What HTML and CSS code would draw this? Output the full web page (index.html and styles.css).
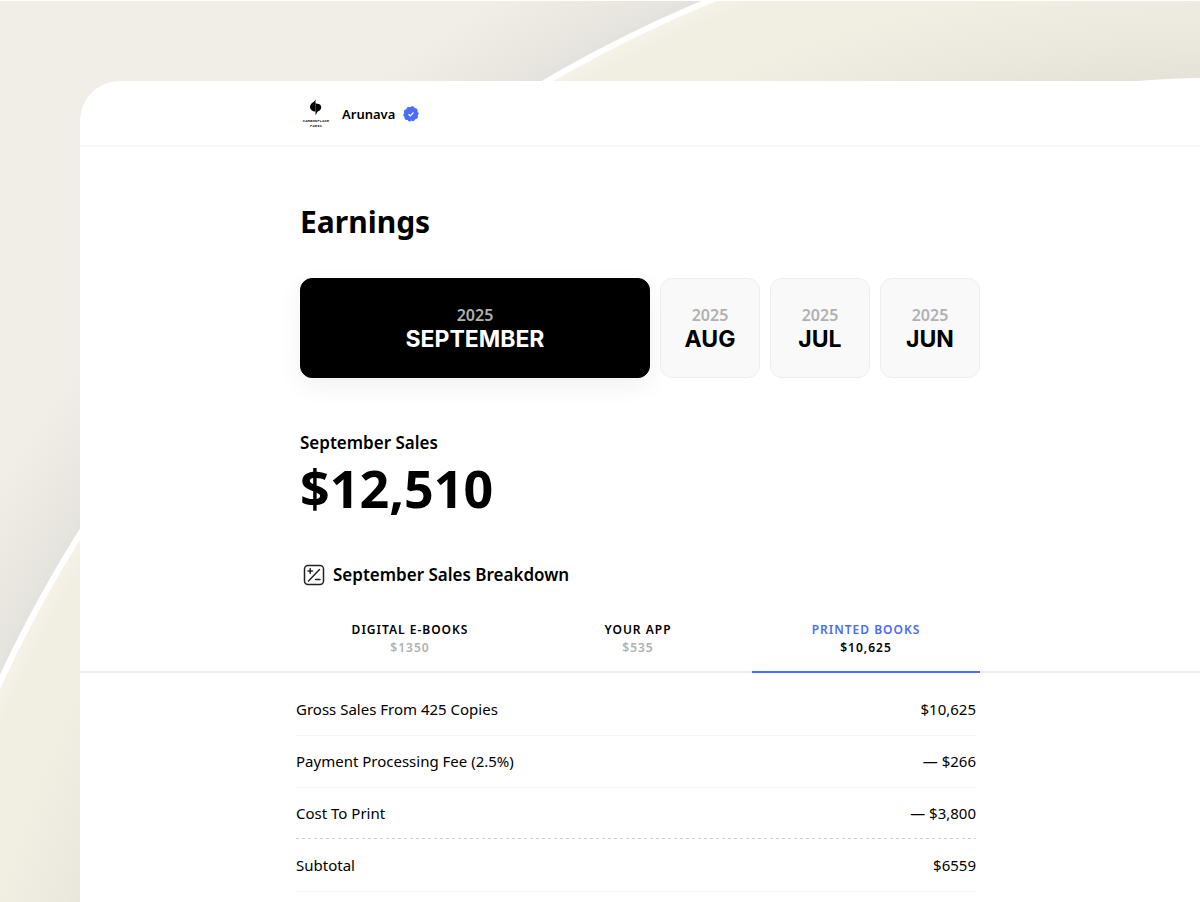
FILE: index.html
```html
<!DOCTYPE html>
<html lang="en">
  <head>
    <meta charset="UTF-8" />
    <meta name="viewport" content="width=device-width, initial-scale=1.0" />
    <title>Earnings</title>
    <link rel="stylesheet" href="styles.css" />
  </head>
  <body>
    <div class="panel">
      <header class="topbar">
        <div class="column account">
          <svg class="logo" viewBox="0 0 32 32" role="img" aria-label="Publisher logo">
            <path d="M15.500 1 V13.500 C12.500 13.500 10 11.600 10 9 C10 6.200 12.200 4.700 13.500 4 C14.500 3.400 15.200 2.500 15.500 1 Z" />
            <path d="M15.500 5 H16.300 V6 C18.800 5.200 21.200 6.800 21.200 9.200 C21.200 11.500 19.500 12.600 18.200 13.300 C17 14 16.200 15.500 16 17.600 L15.500 16 Z" />
            <text x="16" y="24" text-anchor="middle">CARBONPLACE</text>
            <text x="16" y="29" text-anchor="middle">PARIS</text>
          </svg>
          <span class="account-name">Arunava</span>
          <svg class="verified" viewBox="0 0 16 16" role="img" aria-label="Verified">
            <path d="M8 1 L10.300 .8 L11.700 2.500 L13.900 3.200 L14.100 5.500 L15.300 7.500 L14.300 9.600 L14.300 11.900 L12.200 12.800 L10.800 14.700 L8.500 14.300 L6.300 15.200 L4.600 13.600 L2.300 13.200 L1.900 10.900 L.7 9 L1.700 7 L1.500 4.600 L3.500 3.500 L4.700 1.500 L7 1.800 Z" fill="#4a6cf7" stroke="#4a6cf7" stroke-linejoin="round" />
            <path d="M5.500 8.200 L7.300 9.800 L10.500 6.500" fill="none" stroke="#fff" stroke-width="1.200" />
          </svg>
        </div>
      </header>

      <main>
        <section class="column">
          <h1>Earnings</h1>
          <div class="months">
            <button type="button" class="month active">
              <span class="year">2025</span>
              <span class="name">SEPTEMBER</span>
            </button>
            <button type="button" class="month">
              <span class="year">2025</span>
              <span class="name">AUG</span>
            </button>
            <button type="button" class="month">
              <span class="year">2025</span>
              <span class="name">JUL</span>
            </button>
            <button type="button" class="month">
              <span class="year">2025</span>
              <span class="name">JUN</span>
            </button>
          </div>

          <h2>September Sales</h2>
          <p class="total">$12,510</p>

          <div class="breakdown-title">
            <svg viewBox="0 0 24 24" aria-hidden="true">
              <rect x="2.500" y="2.500" width="19" height="19" rx="3.500" />
              <path d="M6.500 18 L17.500 6.500 M6 8 H10.500 M8.200 5.800 V10.200 M13.500 16.500 H18" />
            </svg>
            <h2>September Sales Breakdown</h2>
          </div>
        </section>

        <nav class="tabs-bar">
          <div class="wide tabs">
            <button type="button" class="tab">
              <span class="tab-name">DIGITAL E-BOOKS</span>
              <span class="tab-sum">$1350</span>
            </button>
            <button type="button" class="tab">
              <span class="tab-name">YOUR APP</span>
              <span class="tab-sum">$535</span>
            </button>
            <button type="button" class="tab active">
              <span class="tab-name">PRINTED BOOKS</span>
              <span class="tab-sum">$10,625</span>
            </button>
          </div>
        </nav>

        <div class="wide sales">
          <table>
            <tr>
              <th scope="row">Gross Sales From 425 Copies</th>
              <td>$10,625</td>
            </tr>
            <tr>
              <th scope="row">Payment Processing Fee (2.5%)</th>
              <td>— $266</td>
            </tr>
            <tr class="last-fee">
              <th scope="row">Cost To Print</th>
              <td>— $3,800</td>
            </tr>
            <tr>
              <th scope="row">Subtotal</th>
              <td>$6559</td>
            </tr>
          </table>
        </div>
      </main>
    </div>
  </body>
</html>
```
FILE: styles.css
```css
* {
  box-sizing: border-box;
}
body {
  display: flex;
  min-height: 100vh;
  margin: 0;
  padding: 80px 0 0 80px;
  border-top: 1px solid #fff;
  font-family: "Noto Sans", "Open Sans", sans-serif;
  color: #000;
  /* two big white discs, each casting a soft shadow outwards */
  background: radial-gradient(
    circle at 1228px 1251px,
    #fff 1173px,
    #e5e3d8 1174px,
    #ebe9de 1215px,
    #f1efe2 1280px,
    #f1efe2 1335px,
    #f5f3e8 1350px,
    #fff 1351px,
    #fff 1356px,
    #e3e3de 1357px,
    #e9e6e0 1380px,
    #f1eee7 1450px
  ) no-repeat;
}
h1,
h2,
p {
  margin: 0;
}
button {
  padding: 0;
  border: none;
  background: none;
  font-family: inherit;
  color: inherit;
  cursor: pointer;
}
.panel {
  flex: 1;
  background: #fff;
  border-top-left-radius: 40px;
}
.column {
  width: 100%;
  max-width: 680px;
  margin: 0 auto;
}
.wide {
  width: 100%;
  max-width: 688px;
  margin: 0 auto;
}
.topbar {
  border-bottom: 2px solid #f5f5f5;
}
.account {
  display: flex;
  align-items: center;
  height: 64px;
  padding-top: 2px;
}
.logo {
  width: 32px;
  height: 32px;
  margin-right: 10px;
}
.logo text {
  font-family: "Liberation Mono", monospace;
  font-size: 4px;
  font-weight: bold;
  fill: #333;
}
.account-name {
  margin-right: 8px;
  font-size: 13px;
  font-weight: 600;
}
.verified {
  width: 16px;
  height: 16px;
}
h1 {
  padding-top: 51px;
  font-size: 30px;
  line-height: 48px;
}
.months {
  display: grid;
  grid-template-columns: 1fr 100px 100px 100px;
  gap: 10px;
  margin-top: 32px;
}
.month {
  display: flex;
  flex-direction: column;
  align-items: center;
  justify-content: center;
  height: 100px;
  padding-top: 2px;
  border: 1px solid #eee;
  border-radius: 12px;
  background: #f9f9f9;
}
.month.active {
  border-color: #000;
  background: #000;
  color: #fff;
  box-shadow: 0 8px 24px rgba(0, 0, 0, 0.06);
}
.year {
  font-size: 16px;
  font-weight: 600;
  line-height: 20px;
  color: #b0b0b0;
}
.name {
  font-family: Inter, sans-serif;
  font-size: 23px;
  font-weight: 700;
  line-height: 28px;
}
h2 {
  font-size: 17px;
  font-weight: 600;
  line-height: 28px;
}
.months + h2 {
  margin-top: 51px;
}
.total {
  font-size: 52px;
  font-weight: 700;
  line-height: 62px;
}
.breakdown-title {
  display: flex;
  align-items: center;
  gap: 7px;
  margin-top: 42px;
  padding-left: 2px;
}
.breakdown-title svg {
  width: 24px;
  height: 24px;
  fill: none;
  stroke: #222;
  stroke-width: 1.5;
  stroke-linecap: round;
}
.tabs-bar {
  margin-top: 32px;
  box-shadow: inset 0 -2px #efefef;
}
.tabs {
  display: grid;
  grid-template-columns: repeat(3, 1fr);
  padding-right: 4px;
}
.tab {
  display: flex;
  flex-direction: column;
  align-items: center;
  padding-bottom: 14px;
  border-bottom: 2px solid transparent;
  font-size: 12px;
  font-weight: 600;
  line-height: 18px;
  letter-spacing: 1px;
}
.tab-sum {
  color: #b0b0b0;
}
.tab.active {
  border-bottom-color: #4a6cf7;
}
.tab.active .tab-name {
  color: #4a6cf7;
}
.tab.active .tab-sum {
  color: #000;
}
.sales {
  padding: 10px 8px 0 0;
}
table {
  width: 100%;
  border-collapse: collapse;
  font-size: 15px;
}
th,
td {
  height: 52px;
  padding: 0;
  border-bottom: 1px solid #f5f5f5;
}
th {
  font-weight: 400;
  text-align: left;
}
td {
  text-align: right;
}
.last-fee {
  background: repeating-linear-gradient(to right, #ccc 0 3px, #fff 3px 6px)
    bottom / 100% 1px no-repeat;
}
.last-fee th,
.last-fee td {
  border-bottom-color: transparent;
}
```
